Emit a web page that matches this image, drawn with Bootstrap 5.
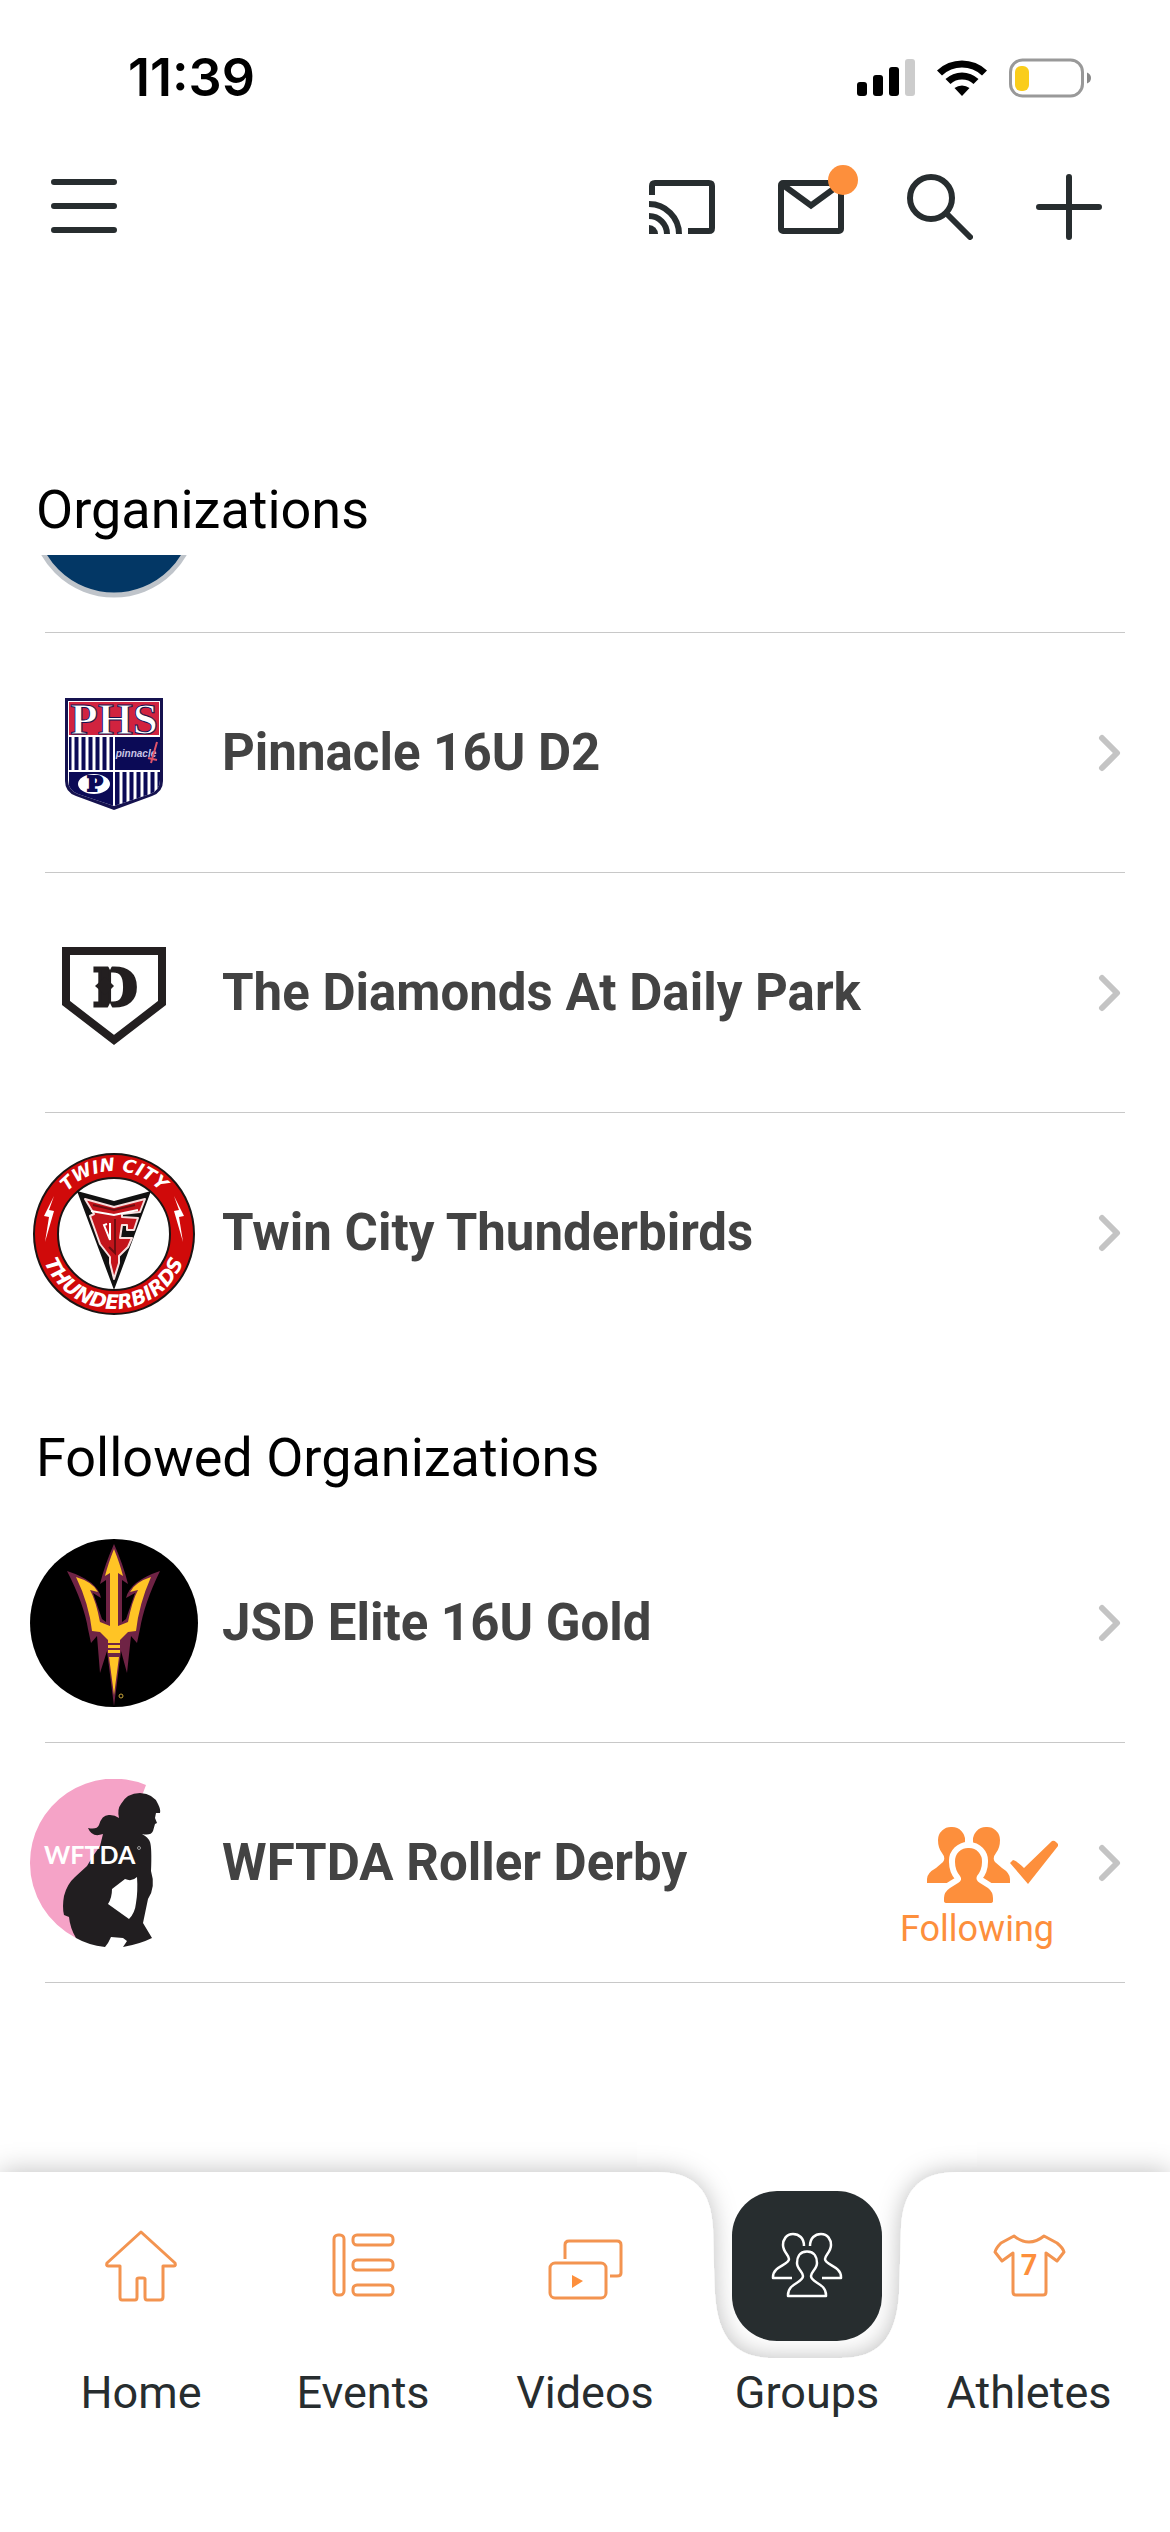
<!DOCTYPE html>
<html lang="en">
<head>
<meta charset="utf-8">
<meta name="viewport" content="width=device-width, initial-scale=1">
<title>Groups</title>
<link href="https://cdn.jsdelivr.net/npm/bootstrap@5.3.0/dist/css/bootstrap.min.css" rel="stylesheet">
<style>
  :root { --ink: #272d2f; --accent: #fd8f3c; --rule: #c8c8c8; }
  body { font-family: Roboto, "Liberation Sans", sans-serif; background: #fff; color: #000; }
  svg { display: block; flex: none; }
  .status-bar { height: 156px; padding: 0 79px 0 128px; }
  .clock { font: 600 52px/60px Inter, "Liberation Sans", sans-serif; }
  .status-icons { gap: 22px; }
  .toolbar { height: 102px; padding: 0 68px 0 51px; color: var(--ink); }
  .tool-group { gap: 63px; }
  .tool { padding: 0; border: 0; background: none; color: inherit; }
  .unread { position: absolute; top: -15px; right: -14px; width: 30px; height: 30px; background: var(--accent); }
  .section-title { font-size: 54px; line-height: 64px; font-weight: 400; margin: 0; padding: 73px 36px 13px; }
  .section-title.first { padding-top: 220px; }
  .org-list { padding: 0 45px; margin: 0; list-style: none; }
  .org { height: 240px; border-bottom: 1px solid var(--rule); color: #434343; text-decoration: none; }
  .org.cut { height: 78px; padding-bottom: 35px; overflow: hidden; margin-left: -15px; border: 0; }
  .cut-rule { border-bottom: 1px solid var(--rule); height: 78px; }
  .org.last { border-bottom: 0; }
  .crest { width: 168px; height: 168px; margin-left: -15px; }
  .cut .crest { margin-left: 0; }
  .org-name { font-size: 51px; line-height: 60px; font-weight: 700; padding-left: 24px; }
  .chevron { margin-right: 4px; }
  .follow { margin-right: 38px; color: var(--accent); font-size: 36px; line-height: 42px; padding-top: 50px; gap: 4px; }
  .follow svg { margin-left: 26px; }
  .tabs { height: 360px; padding: 19px 30px 0; background: #fff; box-shadow: 0 0 26px rgba(0,0,0,.26); position: relative; }
  .tab { color: var(--ink); text-decoration: none; font-size: 45px; line-height: 52px; position: relative; }
  .tab-icon { width: 150px; height: 150px; margin-bottom: 26px; color: #f39450; position: relative; }
  .tab.active .tab-icon { color: #fff; background: var(--ink); border-radius: 45px; }
  .notch { position: absolute; top: -79px; left: 50%; margin-left: -170px; }
</style>
<script src="https://cdn.jsdelivr.net/npm/bootstrap@5.3.0/dist/js/bootstrap.bundle.min.js"></script>
</head>
<body>
<div class="d-flex flex-column min-vh-100 overflow-hidden">

  <div class="status-bar d-flex align-items-center justify-content-between">
    <span class="clock">11:39</span>
    <div class="status-icons d-flex align-items-center">
      <svg width="58" height="38" viewBox="0 0 58 38"><rect y="23" width="10" height="14" rx="3"/><rect x="16" y="16" width="10" height="21" rx="3"/><rect x="32" y="8" width="10" height="29" rx="3"/><rect x="48" width="10" height="37" rx="3" fill="#ccc"/></svg>
      <svg width="50" height="38" viewBox="0 0 50 38"><path d="M0 11.500A36 36 0 0 1 50 11.500L45 16.500A29 29 0 0 0 5 16.500ZM8.500 20A24 24 0 0 1 41.500 20L36.500 25A17 17 0 0 0 13.500 25ZM17.500 29A12.500 12.500 0 0 1 32.500 29L25 37Z"/></svg>
      <svg width="82" height="40" viewBox="0 0 82 40"><rect x="1.500" y="2" width="72" height="36" rx="12" fill="none" stroke="#999" stroke-width="3"/><rect x="6" y="8" width="14" height="25" rx="6" fill="#facd1b"/><path d="M78 14.500Q82 16 82 20T78 25.500Z" fill="#888"/></svg>
    </div>
  </div>

  <header class="toolbar d-flex align-items-center justify-content-between">
    <button class="tool" type="button" aria-label="Menu"><svg width="66" height="66" viewBox="0 0 66 66" stroke="currentColor" stroke-width="6" stroke-linecap="round"><path d="M3 8H63M3 32H63M3 56H63"/></svg></button>
    <div class="tool-group d-flex align-items-center">
      <button class="tool" type="button" aria-label="Cast"><svg width="66" height="54" viewBox="0 0 66 54" fill="none" stroke="currentColor" stroke-width="6"><path d="M3 15V6Q3 3 6 3H60Q63 3 63 6V48Q63 51 60 51H39M0 24A30 30 0 0 1 30 54M0 36A18 18 0 0 1 18 54"/><path d="M0 45A9 9 0 0 1 9 54H0Z" fill="currentColor" stroke="none"/></svg></button>
      <button class="tool position-relative" type="button" aria-label="Messages"><svg width="66" height="54" viewBox="0 0 66 54" fill="none" stroke="currentColor" stroke-width="6"><rect x="3" y="3" width="60" height="48" rx="2"/><path d="M5 5L33 25.500L61 5"/></svg><span class="unread rounded-circle"></span></button>
      <button class="tool" type="button" aria-label="Search"><svg width="66" height="66" viewBox="0 0 66 66" fill="none" stroke="currentColor" stroke-width="6" stroke-linecap="round"><circle cx="24" cy="24" r="21"/><path d="M40 40L63 63"/></svg></button>
      <button class="tool" type="button" aria-label="Add"><svg width="66" height="66" viewBox="0 0 66 66" stroke="currentColor" stroke-width="6" stroke-linecap="round"><path d="M3 33H63M33 3V63"/></svg></button>
    </div>
  </header>

  <main class="flex-grow-1">
    <h2 class="section-title first">Organizations</h2>
    <ul class="org-list">
      <li class="cut-rule">
        <a class="org cut d-flex align-items-end" href="#" aria-label="Organization">
          <svg class="crest" viewBox="0 0 168 168"><circle cx="84" cy="84" r="81" fill="#033765" stroke="#bfc4ca" stroke-width="5"/></svg>
        </a>
      </li>
      <li>
        <a class="org d-flex align-items-center" href="#">
          <svg class="crest" viewBox="0 0 168 168">
            <defs><clipPath id="shield"><path d="M38 32H130V111Q130 121 120 125L84 137L48 125Q38 121 38 111Z"/></clipPath></defs>
            <path d="M35 29H133V112Q133 123 122 127L84 141L46 127Q35 123 35 112Z" fill="#15124f"/>
            <g clip-path="url(#shield)">
              <rect x="37" y="31" width="94" height="108" fill="#fff"/>
              <rect x="39" y="33" width="90" height="33" fill="#d1233f"/>
              <path d="M39 68H83V101H39ZM85 68H130V101H85ZM39 103H83V138H39ZM85 103H130V138H85Z" fill="#0b0a56"/>
              <path d="M43 68V101M50 68V101M57 68V101M64 68V101M71 68V101M78 68V101M91 103V140M98 103V140M105 103V140M112 103V140M119 103V140M126 103V140" stroke="#fff" stroke-width="3"/>
              <ellipse cx="64" cy="115" rx="16" ry="10" fill="#fff"/>
            </g>
            <text x="84" y="65" text-anchor="middle" font-family="Liberation Serif, serif" font-size="45" font-weight="700" fill="#fff" stroke="#15124f" stroke-width="1">PHS</text>
            <text x="65" y="122" text-anchor="middle" font-family="DejaVu Serif, serif" font-size="21" font-weight="700" fill="#0b0a56" stroke="#0b0a56" stroke-width="2">P</text>
            <text x="106" y="88" text-anchor="middle" font-family="Liberation Sans, sans-serif" font-style="italic" font-size="10" font-weight="700" fill="#c9c4e4">pinnacle</text>
            <path d="M127 73L121 94M118 89L127 91" stroke="#e0526a" stroke-width="2"/>
          </svg>
          <span class="org-name flex-grow-1">Pinnacle 16U D2</span>
          <svg class="chevron" width="23" height="38" viewBox="0 0 23 38" fill="none" stroke="#c4c4c4" stroke-width="6" stroke-linecap="round" stroke-linejoin="round"><path d="M4 4L19 19L4 34"/></svg>
        </a>
      </li>
      <li>
        <a class="org d-flex align-items-center" href="#">
          <svg class="crest" viewBox="0 0 168 168">
            <path d="M36 42H132V94L84 131L36 94Z" fill="none" stroke="#231f20" stroke-width="8"/>
            <text x="85" y="97" text-anchor="middle" font-family="DejaVu Serif, serif" font-size="52" font-weight="700" fill="#231f20" stroke="#231f20" stroke-width="3">D</text>
            <path d="M65 77L75 68L84 77L75 86Z" fill="#231f20"/>
            <path d="M77 55H83L80 61ZM77 100H83L80 94Z" fill="#fff"/>
          </svg>
          <span class="org-name flex-grow-1">The Diamonds At Daily Park</span>
          <svg class="chevron" width="23" height="38" viewBox="0 0 23 38" fill="none" stroke="#c4c4c4" stroke-width="6" stroke-linecap="round" stroke-linejoin="round"><path d="M4 4L19 19L4 34"/></svg>
        </a>
      </li>
      <li>
        <a class="org last d-flex align-items-center" href="#">
          <svg class="crest" viewBox="0 0 168 168">
            <defs><path id="arcTop" d="M21 85A63 63 0 0 1 147 85"/><path id="arcLow" d="M9 85A75 75 0 0 0 159 85"/></defs>
            <circle cx="84" cy="85" r="68" fill="none" stroke="#1c1413" stroke-width="26"/>
            <circle cx="84" cy="85" r="68" fill="none" stroke="#d00a0a" stroke-width="22"/>
            <g fill="#fff" font-family="DejaVu Sans, sans-serif" font-weight="700" font-style="italic" text-anchor="middle">
              <text font-size="18"><textPath href="#arcTop" startOffset="50%">TWIN CITY</textPath></text>
              <text font-size="20"><textPath href="#arcLow" startOffset="50%">THUNDERBIRDS</textPath></text>
            </g>
            <path d="M24 47L14 67L19 68L15 93L24 62L19 61ZM144 47L154 67L149 68L153 93L144 62L149 61Z" fill="#fff"/>
            <path d="M47 42L84 52L121 42L84 141Z" fill="#111"/>
            <path d="M55 50L84 58L115 50L110 63L92 65V68L108 69L104 81H97V76H92L90 89H102L98 98L89 107V114L84 130L80 114V108L70 95L60 67L64 65Z" fill="#c3141b" stroke="#f7dede" stroke-width="2" stroke-linejoin="round"/>
            <path d="M61 62L84 66L108 61M77 75L74 76L80 91V74" fill="none" stroke="#fff" stroke-width="2"/>
            <path d="M63 56L84 61L105 56M85 70V104L79 98" fill="none" stroke="#6e0d10" stroke-width="2"/>
          </svg>
          <span class="org-name flex-grow-1">Twin City Thunderbirds</span>
          <svg class="chevron" width="23" height="38" viewBox="0 0 23 38" fill="none" stroke="#c4c4c4" stroke-width="6" stroke-linecap="round" stroke-linejoin="round"><path d="M4 4L19 19L4 34"/></svg>
        </a>
      </li>
    </ul>

    <h2 class="section-title">Followed Organizations</h2>
    <ul class="org-list">
      <li>
        <a class="org d-flex align-items-center" href="#">
          <svg class="crest" viewBox="0 0 168 168">
            <circle cx="84" cy="84" r="84" fill="#000"/>
            <path d="M84 5Q93 25 98 45L92 41V83L96 80L105 54L96 59Q100 42 130 32Q114 65 110 90L107 104L101 97L97 134L91 112L84 167L77 112L70 134L67 97L61 104L58 90Q54 65 37 32Q68 42 71 59L63 54L72 80L76 83V41L70 45Q75 25 84 5Z" fill="#6f2345"/>
            <path d="M84 10Q90 25 93 37L88 34V87L98 83Q102 62 108 51L100 53Q105 43 121 38Q109 65 106 92L98 93L90 101V104H78V101L70 93L62 92Q59 65 46 38Q63 43 68 53L60 51Q66 62 70 83L80 87V34L75 37Q78 25 84 10ZM78 106H90V109H78ZM78 111H90V114H78ZM79 118H89L84 156Z" fill="#ffc425"/>
            <circle cx="91" cy="157" r="2" fill="none" stroke="#c9a53a" stroke-width="1"/>
          </svg>
          <span class="org-name flex-grow-1">JSD Elite 16U Gold</span>
          <svg class="chevron" width="23" height="38" viewBox="0 0 23 38" fill="none" stroke="#c4c4c4" stroke-width="6" stroke-linecap="round" stroke-linejoin="round"><path d="M4 4L19 19L4 34"/></svg>
        </a>
      </li>
      <li>
        <a class="org d-flex align-items-center" href="#">
          <svg class="crest" viewBox="0 0 168 168">
            <path d="M116 6A84 84 0 0 0 0 84A84 84 0 0 0 46 159L60 120L90 60L113 14Z" fill="#f5a3c7"/>
            <path fill-rule="evenodd" d="M89 39Q87 30 91 25Q97 14 110 14Q124 15 128 25Q131 31 130 34L126 34L125 39L127 44L125 45L123 52Q121 57 112 55Q118 58 120 63Q122 69 121 92Q126 108 118 120L113 144L122 159Q110 165 93 168L97 162L93 159L81 158L78 164L75 168Q58 166 46 159Q40 149 39 138L34 136Q32 128 34 117Q37 105 45 98L57 87L63 77L70 67L73 55Q62 59 58 49Q67 51 69 46Q72 35 80 36Q85 36 89 39ZM107 98Q108 112 106 124Q105 134 99 140L78 125Q82 119 82 110L95 100Q102 103 107 98Z" fill="#211e20"/>
            <text x="14" y="85" font-family="Lato, sans-serif" font-size="25" font-weight="700" fill="#fff">WFTDA</text>
            <circle cx="109" cy="69" r="1.500" fill="none" stroke="#999" stroke-width="1"/>
          </svg>
          <span class="org-name flex-grow-1">WFTDA Roller Derby</span>
          <span class="follow d-flex flex-column">
            <svg width="134" height="78" viewBox="0 0 134 78" fill="currentColor">
              <path d="M26 1A13 13 0 0 1 39 15Q39 26 33 32Q33 38 42 42L50 57H1V53Q1 47 10 42L17 36Q20 32 16 27Q12 22 12 14A13 13 0 0 1 26 1Z"/>
              <path d="M60 1A13 13 0 0 0 47 15Q47 26 53 32Q53 38 44 42L36 57H84V53Q84 47 76 42L69 36Q66 32 70 27Q74 22 74 14A13 13 0 0 0 60 1Z"/>
              <path d="M43 22A13 13 0 0 1 56 36Q56 44 51 50Q49 54 54 57L62 62Q67 66 67 72V77H18V72Q18 66 24 62L32 57Q37 54 34 50Q29 44 29 36A13 13 0 0 1 43 22Z" stroke="#fff" stroke-width="12"/>
              <path d="M43 22A13 13 0 0 1 56 36Q56 44 51 50Q49 54 54 57L62 62Q67 66 67 72V75Q67 77 64 77H21Q18 77 18 75V72Q18 66 24 62L32 57Q37 54 34 50Q29 44 29 36A13 13 0 0 1 43 22Z"/>
              <path d="M84 37L87 34Q90 34 98 42L126 15Q128 14 130 16L132 18V20L102 58Z"/>
            </svg>
            <span>Following</span>
          </span>
          <svg class="chevron" width="23" height="38" viewBox="0 0 23 38" fill="none" stroke="#c4c4c4" stroke-width="6" stroke-linecap="round" stroke-linejoin="round"><path d="M4 4L19 19L4 34"/></svg>
        </a>
      </li>
    </ul>
  </main>

  <nav class="tabs d-flex align-items-start" aria-label="Main">
    <a class="tab col d-flex flex-column align-items-center" href="#">
      <span class="tab-icon d-flex align-items-center justify-content-center"><svg width="80" height="80" viewBox="0 0 80 80" fill="none" stroke="currentColor" stroke-width="3" stroke-linejoin="round"><path d="M40 6L74 37Q75 40 73 40H62V71Q62 74 59 74H46Q44 74 44 71V53Q44 52 42 52H38Q36 52 36 53V71Q36 74 34 74H21Q19 74 19 71V40H7Q5 40 6 37Z"/></svg></span>Home</a>
    <a class="tab col d-flex flex-column align-items-center" href="#">
      <span class="tab-icon d-flex align-items-center justify-content-center"><svg width="80" height="80" viewBox="0 0 80 80" fill="none" stroke="currentColor" stroke-width="3"><rect x="11" y="9" width="10" height="60" rx="4"/><rect x="30" y="9" width="40" height="10" rx="4"/><rect x="30" y="34" width="40" height="10" rx="4"/><rect x="30" y="59" width="40" height="10" rx="4"/></svg></span>Events</a>
    <a class="tab col d-flex flex-column align-items-center" href="#">
      <span class="tab-icon d-flex align-items-center justify-content-center"><svg width="80" height="80" viewBox="0 0 80 80" fill="none" stroke="currentColor" stroke-width="3"><rect x="5" y="37" width="56" height="35" rx="5"/><path d="M20 33V19Q20 15 24 15H72Q76 15 76 19V47Q76 50 72 50H65"/><path d="M27 49L38 55L27 62Z" fill="#fd8f3c" stroke="none"/></svg></span>Videos</a>
    <a class="tab active col d-flex flex-column align-items-center" href="#" aria-current="page">
      <svg class="notch" width="340" height="250" viewBox="0 0 340 250">
        <defs><filter id="lift" filterUnits="userSpaceOnUse" x="-60" y="0" width="460" height="320"><feDropShadow dx="0" dy="0" stdDeviation="12" flood-color="#000" flood-opacity=".26"/></filter></defs>
        <rect width="340" height="250" fill="#fff"/>
        <path filter="url(#lift)" fill="#fff" d="M-200 60H20C58 60 74 79 76 116C77 150 77 160 78 182C81 226 98 246 136 246H204C242 246 259 226 262 182C263 160 263 150 264 116C266 79 282 60 320 60H540V420H-200Z"/>
      </svg>
      <span class="tab-icon d-flex align-items-center justify-content-center"><svg width="80" height="80" viewBox="0 0 80 80" fill="none" stroke="currentColor" stroke-width="2.500" stroke-linejoin="round"><path d="M40 25.500C48 25.500 50 32 50 37C50 43 44 46 44 50C44 57 59 57 59 69V70H21V69C21 57 36 57 36 50C36 46 30 43 30 37C30 32 32 25.500 40 25.500Z"/><path d="M37 20C37 12 32 8 26 8C19 8 16 14 16 19C16 26 22 29 22 33C22 39 6 40 6 51V52H25M43 20C43 12 48 8 54 8C61 8 64 14 64 19C64 26 58 29 58 33C58 39 74 40 74 51V52H55"/></svg></span><span class="position-relative">Groups</span></a>
    <a class="tab col d-flex flex-column align-items-center" href="#">
      <span class="tab-icon d-flex align-items-center justify-content-center"><svg width="80" height="80" viewBox="0 0 80 80" fill="none" stroke="currentColor" stroke-width="3" stroke-linejoin="round"><path d="M25 10Q40 22 55 10L68 17Q74 22 75 26L68 35L57 27V66Q57 69 54 69H27Q24 69 24 66V27L13 35L6 26Q7 22 12 17Z"/><text x="40" y="49" text-anchor="middle" font-size="29" font-weight="700" fill="#fd8f3c" stroke="none">7</text></svg></span>Athletes</a>
  </nav>
</div>
</body>
</html>
